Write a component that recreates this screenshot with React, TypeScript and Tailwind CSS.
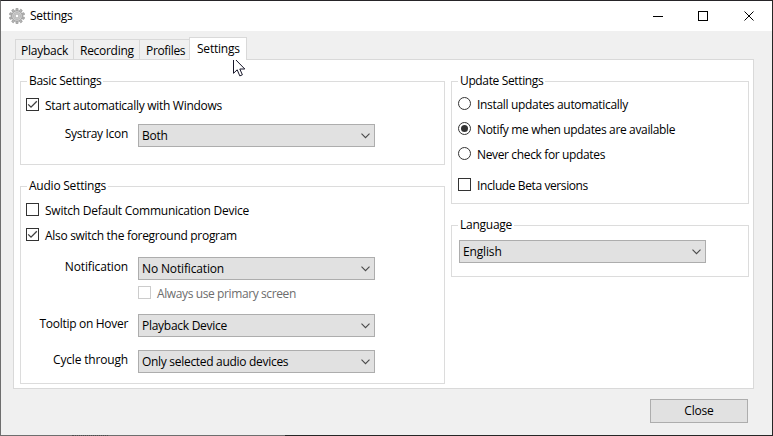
import type { ReactNode } from "react";

function Chevron() {
  return (
    <svg width="9" height="6" viewBox="0 0 9 6" className="shrink-0" fill="none" stroke="#4a4a4a" strokeWidth="1.1">
      <path d="M0.5 0.7 L4.5 4.7 L8.5 0.7" />
    </svg>
  );
}

function Select({ label, className = "", text = "" }: { label: string; className?: string; text?: string }) {
  return (
    <div className={`flex h-[23px] items-center justify-between border border-[#adadad] bg-[#e1e1e1] pr-1 pl-[3px] ${className}`}>
      <span className={text}>{label}</span>
      <Chevron />
    </div>
  );
}

function Check({ label, checked = false, disabled = false, className = "", text = "" }: { label: string; checked?: boolean; disabled?: boolean; className?: string; text?: string }) {
  return (
    <div className={`flex h-[13px] items-center gap-1.5 ${disabled ? "text-[#6d6d6d]" : ""} ${className}`}>
      <span className={`block size-[13px] shrink-0 border bg-white ${disabled ? "border-[#cccccc]" : "border-[#333333]"}`}>
        {checked && (
          <svg width="11" height="11" viewBox="0 0 11 11" fill="none" stroke="#404040" strokeWidth="1.3">
            <path d="M1.2 5.4 L4 8.2 L9.8 2.3" />
          </svg>
        )}
      </span>
      <span className={`pt-0.5 ${text}`}>{label}</span>
    </div>
  );
}

function Radio({ label, checked = false, className = "", text = "" }: { label: string; checked?: boolean; className?: string; text?: string }) {
  return (
    <div className={`flex h-[13px] items-center gap-1.5 ${className}`}>
      <span className="flex size-[13px] shrink-0 items-center justify-center rounded-full border border-[#333333] bg-white">
        {checked && <span className="block size-[7px] rounded-full bg-[#333333]" />}
      </span>
      <span className={`pt-0.5 ${text}`}>{label}</span>
    </div>
  );
}

function Group({ title, className = "", text = "", children }: { title: string; className?: string; text?: string; children: ReactNode }) {
  return (
    <section className={`flex flex-col border border-[#dcdcdc] ${className}`}>
      <h2 className="-mt-[9px] ml-1.5 flex h-[17px] w-fit items-start bg-white px-0.5">
        <span className={text}>{title}</span>
      </h2>
      {children}
    </section>
  );
}

function Row({ label, className = "", text = "", children }: { label: string; className?: string; text?: string; children: ReactNode }) {
  return (
    <div className={`flex h-[23px] ${className}`}>
      <div className="flex h-5 w-[107px] items-center justify-end">
        <span className={text}>{label}</span>
      </div>
      <div className="ml-2.5">{children}</div>
    </div>
  );
}

const tab = "flex h-5 items-center border-t border-[#d9d9d9] bg-[#f0f0f0] pt-0.5";

function Gear() {
  const teeth = [0, 36, 72, 108, 144, 180, 216, 252, 288, 324];
  return (
    <svg width="16" height="16" viewBox="0 0 16 16">
      {teeth.map((a) => (
        <rect key={a} x="6.9" y="0.3" width="2.2" height="3.2" rx="0.4" fill="#b8b8b8" stroke="#7d7d7d" strokeWidth="0.5" transform={`rotate(${a} 8 8)`} />
      ))}
      <circle cx="8" cy="8" r="5.3" fill="#d2d2d2" stroke="#959595" strokeWidth="0.7" />
      <circle cx="8" cy="8" r="3.5" fill="none" stroke="#b0b0b0" strokeWidth="0.8" />
      <circle cx="8" cy="8" r="1.9" fill="#ffffff" stroke="#999999" strokeWidth="0.7" />
    </svg>
  );
}

export default function App() {
  return (
    <div className="relative h-[436px] w-[773px] overflow-hidden whitespace-nowrap bg-[#262626] font-['Open_Sans','Noto_Sans',sans-serif] text-[12px] leading-4 text-black">
      <div className="flex h-[435px] w-[772px] flex-col border-t border-l border-t-[#262428] border-l-[#6e6e6e] bg-[#f0f0f0]">
        <header className="flex h-[30px] shrink-0 items-center justify-between bg-white pr-[17px] pl-2">
          <div className="flex items-center gap-[5px]">
            <Gear />
            <span className="tracking-[-0.25px]">Settings</span>
          </div>
          <svg width="102" height="12" viewBox="0 0 102 12" fill="none" stroke="#000">
            <path d="M0 6.5H10" />
            <rect x="45.5" y="1.5" width="9" height="9" />
            <path d="M91.5 1.5L100.5 10.5M100.5 1.5L91.5 10.5" />
          </svg>
        </header>

        <nav className="mt-1.5 ml-3.5 flex h-[22px] shrink-0 items-end">
          <div className={`${tab} w-[58px] border-l pl-[5px] tracking-[-0.25px]`}>Playback</div>
          <div className={`${tab} w-[66px] border-l pl-1.5 tracking-[-0.28px]`}>Recording</div>
          <div className={`${tab} w-[50px] border-l pl-1.5 tracking-[-0.33px]`}>Profiles</div>
          <div className="z-10 -mb-px flex h-[23px] w-[58px] items-center border border-b-0 border-[#d9d9d9] bg-white pb-px pl-[7px] tracking-[-0.22px]">Settings</div>
        </nav>

        <main className="ml-3 flex h-[330px] w-[741px] shrink-0 gap-1.5 border border-[#d9d9d9] bg-white pt-[21px] pl-1.5">
          <div className="flex flex-col">
            <Group title="Basic Settings" text="tracking-[-0.3px]" className="h-[84px] w-[425px]">
              <Check label="Start automatically with Windows" text="tracking-[-0.29px]" checked className="mt-2 ml-[5px]" />
              <Row label="Systray Icon" text="tracking-[-0.32px]" className="mt-[13px]">
                <Select label="Both" text="tracking-[-0.25px]" className="w-[237px]" />
              </Row>
            </Group>
            <Group title="Audio Settings" text="tracking-[-0.23px]" className="mt-[21px] h-[198px] w-[425px]">
              <Check label="Switch Default Communication Device" text="tracking-[-0.24px]" className="mt-2 ml-[5px]" />
              <Check label="Also switch the foreground program" text="tracking-[-0.3px]" checked className="mt-3 ml-[5px]" />
              <Row label="Notification" text="tracking-[-0.15px]" className="mt-4">
                <Select label="No Notification" text="tracking-[-0.15px]" className="w-[237px]" />
              </Row>
              <Check label="Always use primary screen" text="tracking-[-0.39px]" disabled className="mt-1.5 ml-[117px]" />
              <Row label="Tooltip on Hover" text="tracking-[-0.3px]" className="mt-[15px]">
                <Select label="Playback Device" text="tracking-[-0.27px]" className="w-[237px]" />
              </Row>
              <Row label="Cycle through" text="tracking-[-0.17px]" className="mt-[13px]">
                <Select label="Only selected audio devices" text="tracking-[-0.3px]" className="w-[237px]" />
              </Row>
            </Group>
          </div>
          <div className="flex flex-col">
            <Group title="Update Settings" text="tracking-[-0.36px]" className="h-[123px] w-[298px]">
              <Radio label="Install updates automatically" text="tracking-[-0.32px]" className="mt-[7px] ml-1.5" />
              <Radio label="Notify me when updates are available" text="tracking-[-0.35px]" checked className="mt-3 ml-1.5" />
              <Radio label="Never check for updates" text="tracking-[-0.36px]" className="mt-3 ml-1.5" />
              <Check label="Include Beta versions" text="tracking-[-0.4px]" className="mt-[18px] ml-1.5" />
            </Group>
            <Group title="Language" text="tracking-[-0.25px]" className="mt-[21px] h-[52px] w-[298px]">
              <Select label="English" text="tracking-[-0.15px]" className="mt-[6px] ml-[7px] w-[247px]" />
            </Group>
          </div>
        </main>

        <footer className="mt-2.5 flex justify-end pr-6">
          <button className="h-6 w-[98px] border border-[#adadad] bg-[#e1e1e1] tracking-[-0.2px]">Close</button>
        </footer>
      </div>
      <div className="flex h-px w-[285px] bg-[#6e6e6e] pl-[72px]">
        <div className="w-9 border-t border-dotted border-[#4c4c4c]" />
      </div>
      <svg width="13" height="20" viewBox="0 0 13 20" className="absolute top-[57px] left-[233px]">
        <path d="M0.5 0.5V16.3L4.2 12.8L6.8 18.9L9.4 17.8L6.8 12H11.8Z" fill="#fff" stroke="#17172a" strokeWidth="1" />
      </svg>
    </div>
  );
}
